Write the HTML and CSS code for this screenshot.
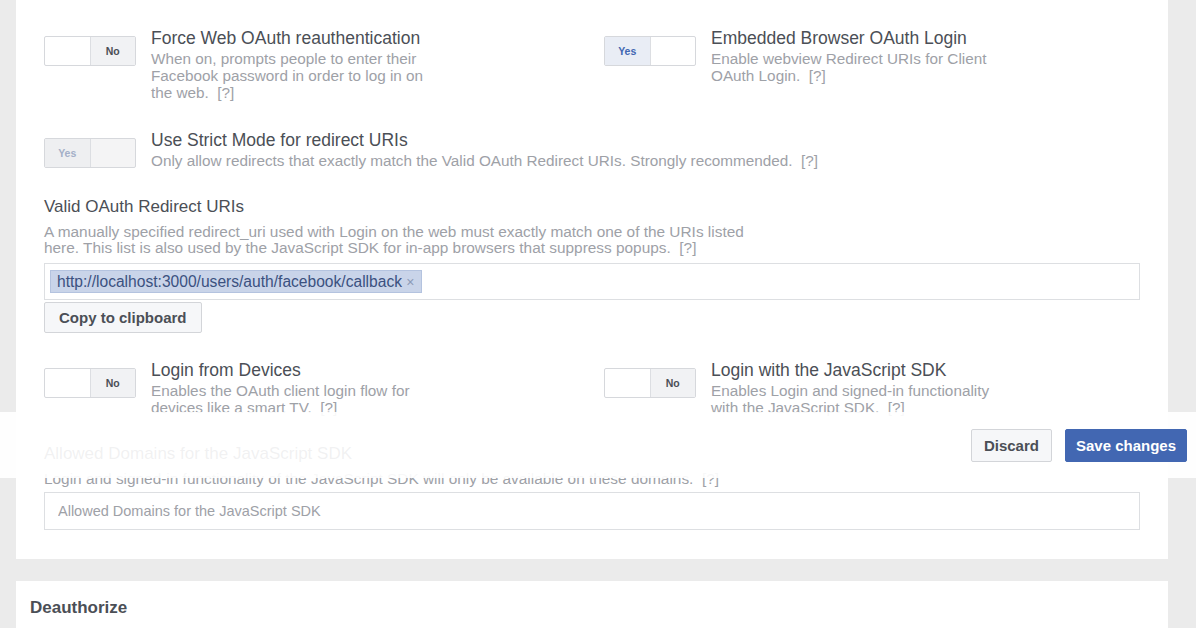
FILE: index.html
```html
<!DOCTYPE html>
<html lang="en">

<head>
    <meta charset="UTF-8">
    <meta name="viewport" content="width=device-width, initial-scale=1.0">
    <title>Facebook Login Settings</title>
    <link rel="stylesheet" href="styles.css">
</head>

<body>
<div class="page">
    <div class="card">
        <div class="toggle_grid">
            <div class="setting">
                <div class="toggle"><span class="t_half"></span><span class="t_half t_no">No</span></div>
                <div class="setting_text">
                    <p class="setting_title">Force Web OAuth reauthentication</p>
                    <p class="setting_desc">When on, prompts people to enter their Facebook password in order to log in on the web.&nbsp; [?]</p>
                </div>
            </div>
            <div class="setting">
                <div class="toggle"><span class="t_half t_yes">Yes</span><span class="t_half"></span></div>
                <div class="setting_text">
                    <p class="setting_title">Embedded Browser OAuth Login</p>
                    <p class="setting_desc">Enable webview Redirect URIs for Client OAuth Login.&nbsp; [?]</p>
                </div>
            </div>
            <div class="setting wide">
                <div class="toggle disabled"><span class="t_half t_yes">Yes</span><span class="t_half"></span></div>
                <div class="setting_text">
                    <p class="setting_title">Use Strict Mode for redirect URIs</p>
                    <p class="setting_desc">Only allow redirects that exactly match the Valid OAuth Redirect URIs. Strongly recommended.&nbsp; [?]</p>
                </div>
            </div>
        </div>

        <div class="field">
            <p class="field_label">Valid OAuth Redirect URIs</p>
            <p class="field_desc">A manually specified redirect_uri used with Login on the web must exactly match one of the URIs listed here. This list is also used by the JavaScript SDK for in-app browsers that suppress popups.&nbsp; [?]</p>
            <div class="token_input">
                <span class="token">http://localhost:3000/users/auth/facebook/callback <span class="token_x">&times;</span></span>
            </div>
            <button class="btn copy_btn">Copy to clipboard</button>
        </div>

        <div class="toggle_grid grid_after">
            <div class="setting">
                <div class="toggle"><span class="t_half"></span><span class="t_half t_no">No</span></div>
                <div class="setting_text">
                    <p class="setting_title">Login from Devices</p>
                    <p class="setting_desc">Enables the OAuth client login flow for devices like a smart TV.&nbsp; [?]</p>
                </div>
            </div>
            <div class="setting">
                <div class="toggle"><span class="t_half"></span><span class="t_half t_no">No</span></div>
                <div class="setting_text">
                    <p class="setting_title">Login with the JavaScript SDK</p>
                    <p class="setting_desc">Enables Login and signed-in functionality with the JavaScript SDK.&nbsp; [?]</p>
                </div>
            </div>
        </div>

        <div class="field">
            <p class="field_label">Allowed Domains for the JavaScript SDK</p>
            <p class="field_desc">Login and signed-in functionality of the JavaScript SDK will only be available on these domains.&nbsp; [?]</p>
            <input class="text_input" type="text" placeholder="Allowed Domains for the JavaScript SDK">
        </div>
    </div>

    <div class="card card_small">
        <p class="card_head">Deauthorize</p>
    </div>
</div>

<!-- sticky save bar, sits over the form -->
<div class="save_bar">
    <button class="btn">Discard</button>
    <button class="btn btn_blue">Save changes</button>
</div>
</body>

</html>
```

FILE: styles.css
```css
* {
    margin: 0;
    padding: 0;
    box-sizing: border-box;
}

body {
    background: #ebebeb;
    font-family: "Liberation Sans", Helvetica, Arial, sans-serif;
    color: #4b4f56;
}

.page {
    padding: 0 28px 0 16px;
}

.card {
    background: #fff;
    padding: 28px 28px 29px;
}

.card_small {
    margin-top: 22px;
    padding: 17px 14px 20px;
}

.card_head {
    font-size: 17px;
    font-weight: bold;
    line-height: 20px;
}

.toggle_grid {
    display: grid;
    grid-template-columns: 560px 1fr;
    row-gap: 29px;
}

.grid_after {
    margin-top: 27px;
}

.wide {
    grid-column: 1 / -1;
}

.setting {
    display: flex;
    gap: 15px;
}

.setting_text {
    max-width: 286px;
}

.wide .setting_text {
    max-width: none;
}

.setting_title {
    font-size: 17.5px;
    line-height: 20px;
    margin-bottom: 2px;
}

.setting_desc {
    font-size: 15.3px;
    line-height: 17px;
    color: #9ea1a7;
}

/* yes / no switch */
.toggle {
    flex: none;
    display: flex;
    width: 92px;
    height: 30px;
    margin-top: 8px;
    border: 1px solid #d6d8dc;
    border-radius: 2px;
    background: #fff;
}

.t_half {
    flex: 1;
    display: flex;
    align-items: center;
    justify-content: center;
    font-size: 10.5px;
    font-weight: bold;
}

.t_no {
    background: #f1f2f4;
    border-left: 1px solid #dcdee2;
    color: #4b4f56;
}

.t_yes {
    background: #e9edf5;
    border-right: 1px solid #dcdee2;
    color: #4267b2;
}

.disabled {
    background: #f4f4f5;
}

.disabled .t_yes {
    background: #eeeff1;
    color: #a4b0c8;
}

.field {
    margin-top: 28px;
}

.field_label {
    font-size: 17px;
    line-height: 20px;
}

.field_desc {
    margin-top: 7px;
    max-width: 722px;
    font-size: 15.4px;
    line-height: 16px;
    color: #9ea1a7;
}

.token_input {
    margin-top: 7px;
    height: 37px;
    border: 1px solid #dddfe2;
    padding: 6px 5px;
}

.token {
    display: inline-block;
    height: 23px;
    line-height: 21px;
    padding: 0 6px;
    background: #c9d4e9;
    border: 1px solid #b4c3df;
    font-size: 15.6px;
    color: #3b5180;
}

.token_x {
    color: #8d9bb7;
    font-size: 14px;
}

.btn {
    height: 31px;
    padding: 0 14px;
    border: 1px solid #d3d5d9;
    border-radius: 2px;
    background: #f6f7f9;
    font-family: "Liberation Sans", Helvetica, Arial, sans-serif;
    font-size: 15px;
    font-weight: bold;
    color: #4b4f56;
}

.copy_btn {
    margin-top: 2px;
}

.text_input {
    display: block;
    width: 100%;
    height: 38px;
    margin-top: 5px;
    border: 1px solid #dddfe2;
    padding: 0 13px;
    font-family: "Liberation Sans", Helvetica, Arial, sans-serif;
    font-size: 14.5px;
}

.text_input::placeholder {
    color: #9ea1a7;
}

.save_bar {
    position: fixed;
    top: 412px;
    left: 0;
    right: 0;
    height: 66px;
    display: flex;
    align-items: center;
    justify-content: flex-end;
    gap: 13px;
    padding-right: 9px;
    background: rgba(255, 255, 255, 0.92);
}

.save_bar .btn {
    height: 33px;
    padding: 0 12px;
}

.save_bar .btn_blue {
    padding: 0 10px;
}

.btn_blue {
    background: #4267b2;
    border-color: #4267b2;
    color: #fff;
}
```
